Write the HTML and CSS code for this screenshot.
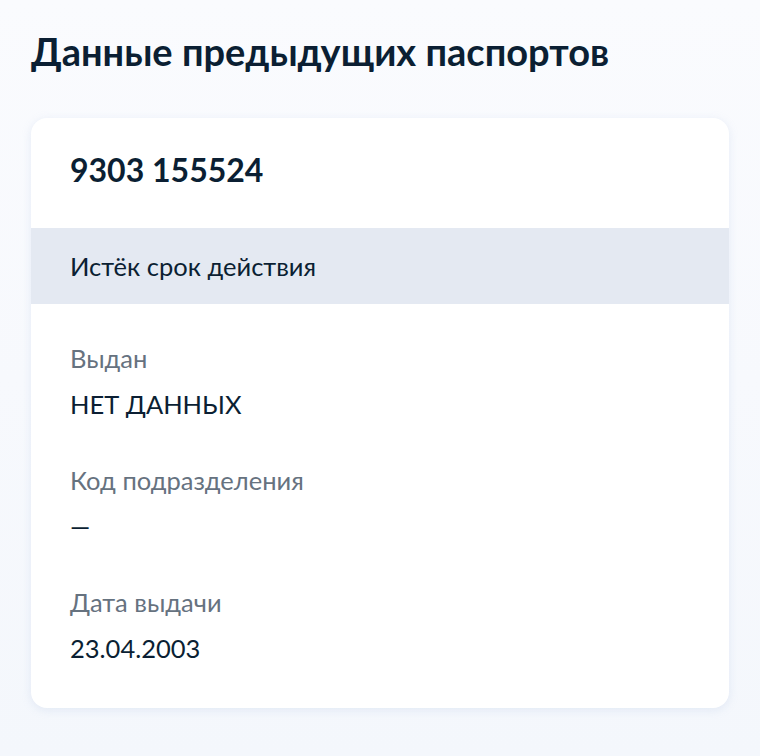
FILE: index.html
```html
<!DOCTYPE html>
<html lang="ru">
<head>
<meta charset="utf-8">
<link rel="stylesheet" href="styles.css">
</head>
<body>
<main class="page">
  <h1 class="title">Данные предыдущих паспортов</h1>
  <section class="card">
    <div class="card-head">9303 155524</div>
    <div class="status">Истёк срок действия</div>
    <div class="fields">
      <div class="field">
        <div class="label">Выдан</div>
        <div class="value">НЕТ ДАННЫХ</div>
      </div>
      <div class="field">
        <div class="label">Код подразделения</div>
        <div class="value">—</div>
      </div>
      <div class="field">
        <div class="label">Дата выдачи</div>
        <div class="value">23.04.2003</div>
      </div>
    </div>
  </section>
</main>
</body>
</html>
```
FILE: styles.css
```css
html, body {
  margin: 0;
  padding: 0;
}
body {
  width: 760px;
  height: 756px;
  overflow: hidden;
  background: linear-gradient(180deg, #fafbfe 0%, #f4f7fc 100%);
  font-family: Lato, "Noto Sans", sans-serif;
  color: #0b1f33;
}
.page {
  padding: 31px 31px 0;
}
.title {
  margin: 0;
  font-size: 38px;
  line-height: 40px;
  font-weight: 700;
  color: #0b1f33;
}
.card {
  margin-top: 47px;
  background: #fff;
  border-radius: 16px;
  box-shadow: 0 2px 10px rgba(160, 180, 220, 0.22);
  overflow: hidden;
}
.card-head {
  padding: 34px 39px 40px;
  font-size: 32px;
  line-height: 36px;
  font-weight: 700;
}
.status {
  background: #e4e9f2;
  height: 76px;
  display: flex;
  align-items: center;
  padding: 0 39px;
  font-size: 25.5px;
}
.fields {
  padding: 38px 39px 44px;
  display: flex;
  flex-direction: column;
  gap: 44px;
}
.field {
  display: flex;
  flex-direction: column;
  gap: 14px;
}
.label {
  font-size: 25.5px;
  line-height: 32px;
  color: #66727f;
}
.value {
  font-size: 25.5px;
  line-height: 32px;
  color: #0b1f33;
}
```
